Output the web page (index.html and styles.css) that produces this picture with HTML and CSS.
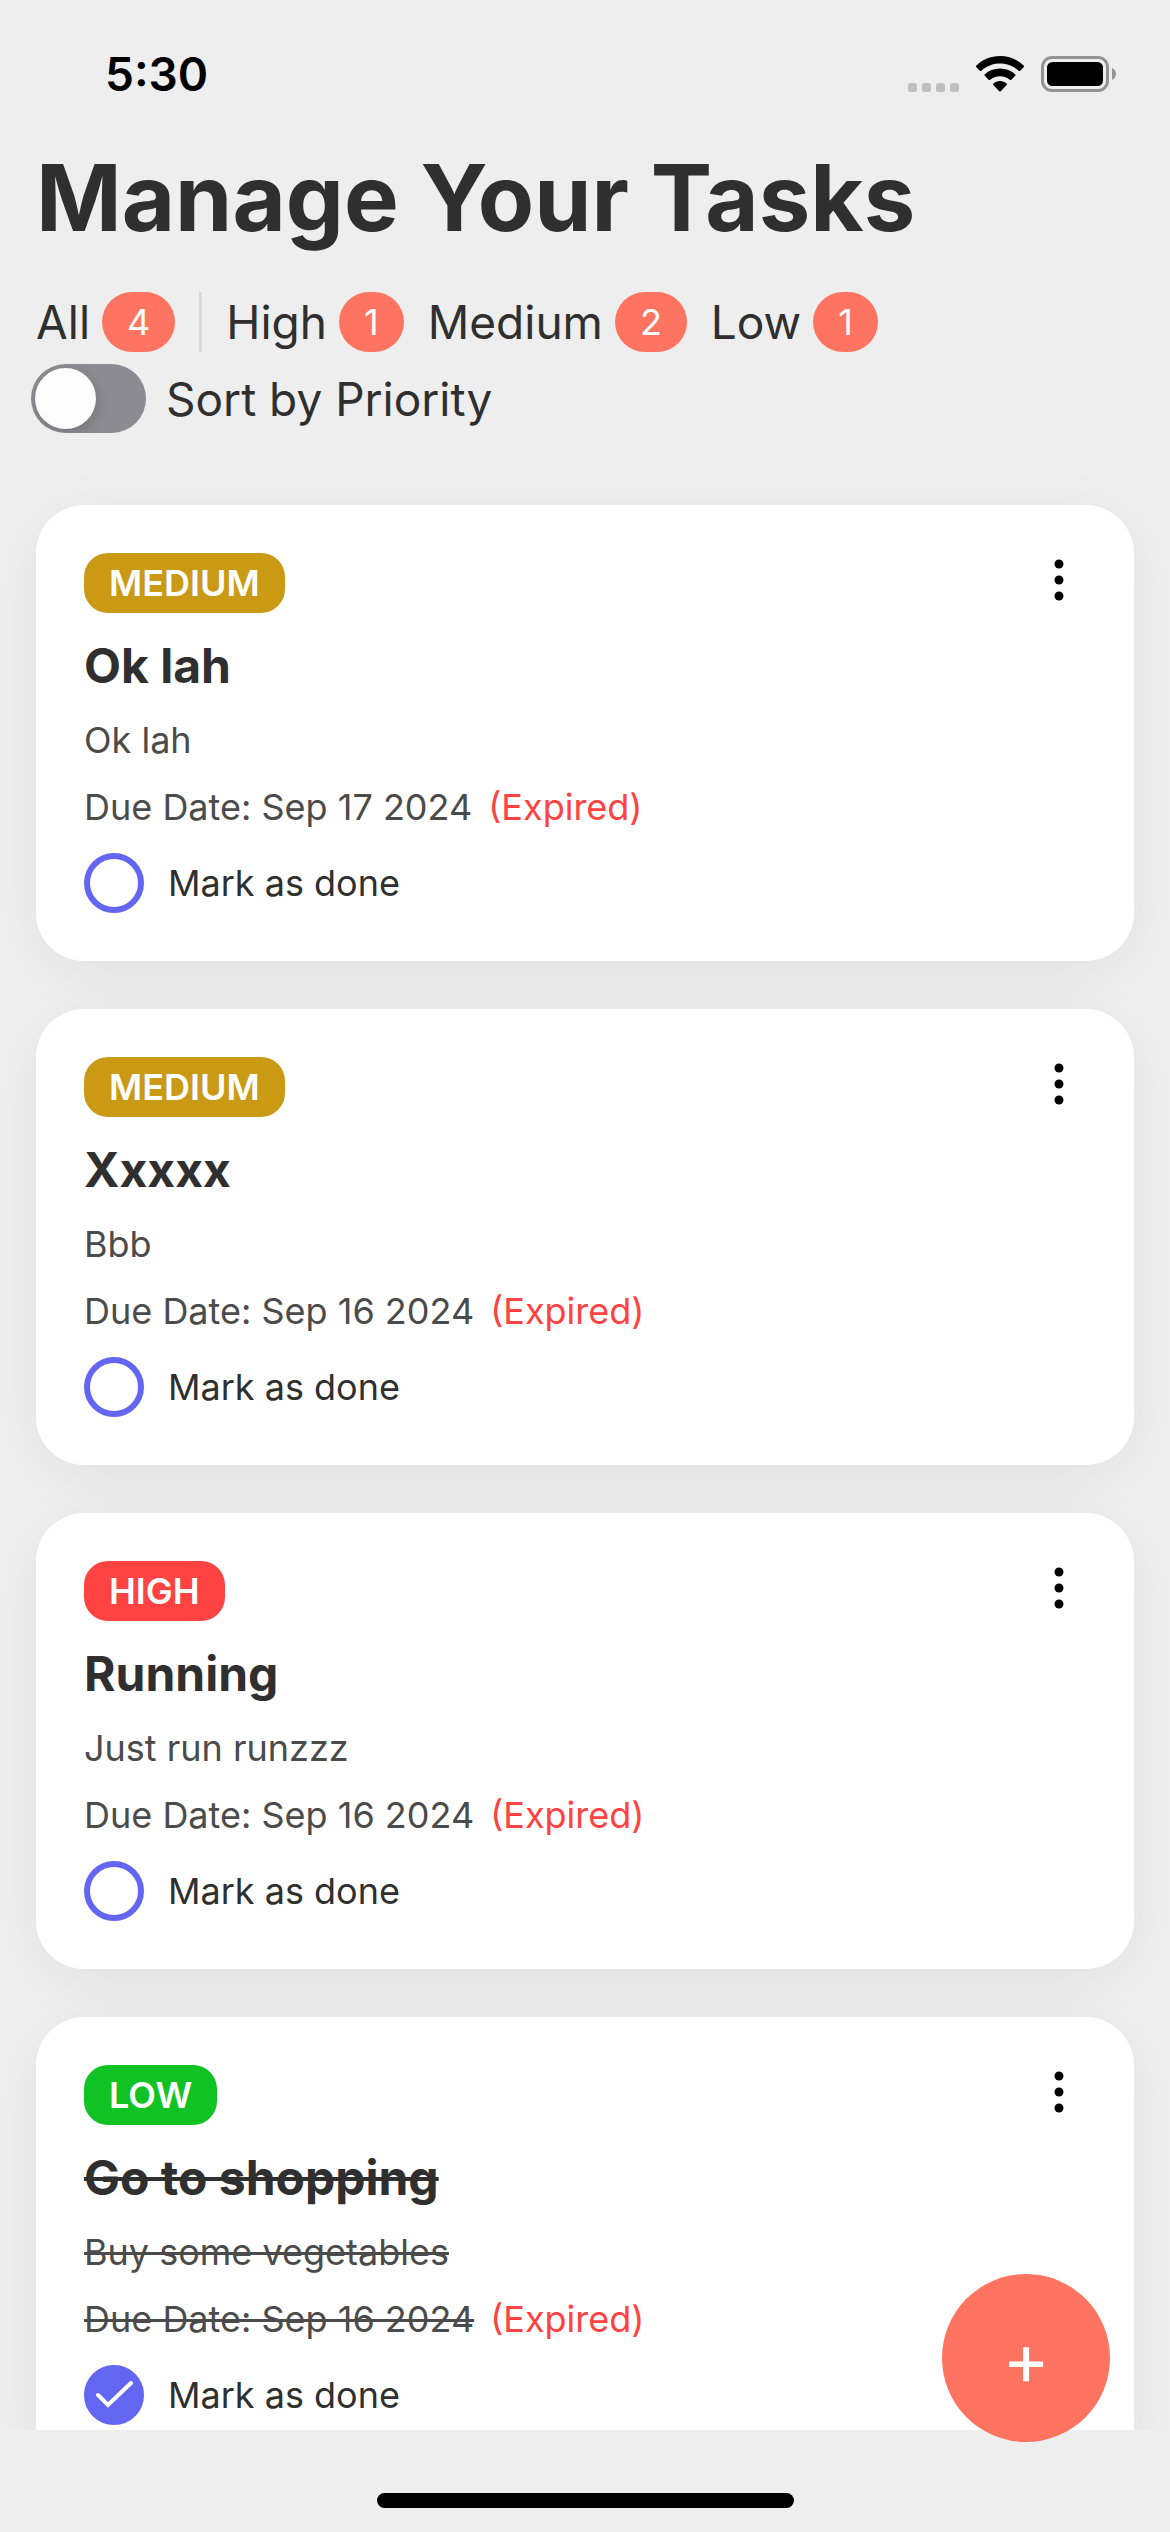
FILE: index.html
```html
<!DOCTYPE html>
<html lang="en">
<head>
<meta charset="utf-8">
<meta name="viewport" content="width=device-width, initial-scale=1">
<title>Manage Your Tasks</title>
<link rel="stylesheet" href="styles.css">
</head>
<body>
<div class="screen">
  <div class="status-bar">
    <span class="clock">5:30</span>
    <div class="status-icons">
      <svg class="icon-cell" width="51" height="9" viewBox="0 0 51 9" aria-hidden="true"><rect width="9" height="9" rx="2.5"/><rect x="14" width="9" height="9" rx="2.5"/><rect x="28" width="9" height="9" rx="2.5"/><rect x="42" width="9" height="9" rx="2.5"/></svg>
      <svg class="icon-wifi" width="50" height="36" viewBox="0 0 50 36" aria-hidden="true"><path d="M25 0C34.400 0 42.800 3.600 48.600 9.600Q49.400 10.400 48.600 11.200L45.200 14.700Q44.400 15.500 43.600 14.700C38.700 10.200 32.200 7.500 25 7.500S11.300 10.200 6.400 14.700Q5.600 15.500 4.800 14.700L1.400 11.200Q.6 10.400 1.400 9.600C7.200 3.600 15.600 0 25 0Z"/><path d="M25 12.500C31 12.500 36.200 14.700 40.200 18.200Q41 19 40.200 19.800L36.400 23.700Q35.600 24.500 34.800 23.800C32.200 21.500 28.800 20.200 25 20.200S17.800 21.500 15.200 23.800Q14.400 24.500 13.600 23.700L9.800 19.800Q9 19 9.800 18.200C13.800 14.700 19 12.500 25 12.500Z"/><path d="M25 25C27.500 25 29.800 25.900 31.600 27.400Q32.400 28.200 31.600 29L25.800 35.200Q25 36 24.200 35.200L18.400 29Q17.600 28.200 18.400 27.400C20.200 25.900 22.500 25 25 25Z"/></svg>
      <svg class="icon-battery" width="75" height="36" viewBox="0 0 75 36" aria-hidden="true"><rect x="1.500" y="1.500" width="65" height="33" rx="9.500" fill="none" stroke="#929292" stroke-width="3"/><rect x="6" y="6" width="56" height="24" rx="5.500"/><path d="M71 12C76.300 14.500 76.300 21.500 71 24Z" fill="#929292"/></svg>
    </div>
  </div>

  <header class="header">
    <h1 class="title">Manage Your Tasks</h1>
    <div class="filters">
      <button class="filter filter-all" type="button">All <span class="count">4</span></button>
      <button class="filter" type="button">High <span class="count">1</span></button>
      <button class="filter" type="button">Medium <span class="count">2</span></button>
      <button class="filter" type="button">Low <span class="count">1</span></button>
    </div>
    <label class="sort"><input class="switch" type="checkbox" role="switch">Sort by Priority</label>
  </header>

  <main class="tasks">
    <article class="card">
      <div class="card-top"><span class="priority medium">MEDIUM</span>
        <button class="more" type="button" aria-label="Task options"><svg width="54" height="54" viewBox="0 0 54 54"><circle cx="27" cy="11" r="4.500"/><circle cx="27" cy="27" r="4.500"/><circle cx="27" cy="43" r="4.500"/></svg></button></div>
      <h2 class="name">Ok lah</h2>
      <p class="detail">Ok lah</p>
      <p class="due"><span class="detail">Due Date: Sep 17 2024</span><span class="expired">(Expired)</span></p>
      <label class="done"><input class="check" type="checkbox">Mark as done</label>
    </article>
    <article class="card">
      <div class="card-top"><span class="priority medium">MEDIUM</span>
        <button class="more" type="button" aria-label="Task options"><svg width="54" height="54" viewBox="0 0 54 54"><circle cx="27" cy="11" r="4.500"/><circle cx="27" cy="27" r="4.500"/><circle cx="27" cy="43" r="4.500"/></svg></button></div>
      <h2 class="name">Xxxxx</h2>
      <p class="detail">Bbb</p>
      <p class="due"><span class="detail">Due Date: Sep 16 2024</span><span class="expired">(Expired)</span></p>
      <label class="done"><input class="check" type="checkbox">Mark as done</label>
    </article>
    <article class="card">
      <div class="card-top"><span class="priority high">HIGH</span>
        <button class="more" type="button" aria-label="Task options"><svg width="54" height="54" viewBox="0 0 54 54"><circle cx="27" cy="11" r="4.500"/><circle cx="27" cy="27" r="4.500"/><circle cx="27" cy="43" r="4.500"/></svg></button></div>
      <h2 class="name">Running</h2>
      <p class="detail">Just run runzzz</p>
      <p class="due"><span class="detail">Due Date: Sep 16 2024</span><span class="expired">(Expired)</span></p>
      <label class="done"><input class="check" type="checkbox">Mark as done</label>
    </article>
    <article class="card completed">
      <div class="card-top"><span class="priority low">LOW</span>
        <button class="more" type="button" aria-label="Task options"><svg width="54" height="54" viewBox="0 0 54 54"><circle cx="27" cy="11" r="4.500"/><circle cx="27" cy="27" r="4.500"/><circle cx="27" cy="43" r="4.500"/></svg></button></div>
      <h2 class="name">Go to shopping</h2>
      <p class="detail">Buy some vegetables</p>
      <p class="due"><span class="detail">Due Date: Sep 16 2024</span><span class="expired">(Expired)</span></p>
      <label class="done"><input class="check" type="checkbox" checked>Mark as done</label>
    </article>
  </main>

  <footer class="home-area"><div class="home-indicator"></div></footer>
  <button class="fab" type="button" aria-label="Add task">+</button>
</div>
</body>
</html>
```
FILE: styles.css
```css
* { box-sizing: border-box; }

body {
  margin: 0;
  background: #eee;
  color: #2f2f2f;
  font-family: Inter, "Liberation Sans", sans-serif;
}

h1, h2, p { margin: 0; }

button {
  margin: 0;
  padding: 0;
  border: 0;
  background: none;
  color: inherit;
  font: inherit;
}

.screen {
  position: relative;
  display: flex;
  flex-direction: column;
  height: 100vh;
  overflow: hidden;
}

/* Status bar */
.status-bar {
  display: flex;
  flex: none;
  align-items: center;
  justify-content: space-between;
  height: 148px;
  padding: 0 54px 0 105px;
  color: #000;
}

.clock {
  font-size: 46px;
  font-weight: 600;
  line-height: 56px;
}

.status-icons {
  display: flex;
  align-items: flex-end;
  gap: 16px;
}

.icon-cell { fill: #bfbfbf; }

/* Header */
.header {
  flex: none;
  padding: 0 36px;
}

.title {
  font-size: 92px;
  font-weight: 700;
  line-height: 100px;
}

.filters {
  display: flex;
  gap: 24px;
  margin-top: 44px;
}

.filter {
  display: flex;
  align-items: center;
  gap: 12px;
  height: 60px;
  font-size: 46px;
  line-height: 58px;
}

.filter-all {
  padding-right: 24px;
  border-right: 3px solid #d8d8d8;
}

.count {
  padding: 0 25px;
  border-radius: 30px;
  background: #ff7461;
  color: #fff;
  font-size: 36px;
  line-height: 60px;
}

.sort {
  display: flex;
  align-items: center;
  gap: 20px;
  width: max-content;
  margin: 12px 0 0 -5px;
  font-size: 46px;
}

.switch {
  appearance: none;
  display: flex;
  align-items: center;
  width: 115px;
  height: 69px;
  margin: 0;
  padding: 4px;
  overflow: hidden;
  border-radius: 35px;
  background: #8b8b91;
}

.switch::before {
  content: "";
  width: 61px;
  height: 61px;
  border-radius: 50%;
  background: #fcfcfc;
  box-shadow: 2px 4px 12px rgba(0, 0, 0, 0.15);
}

.switch:checked { justify-content: flex-end; }

/* Task list */
.tasks {
  display: flex;
  flex: 1;
  flex-direction: column;
  gap: 48px;
  min-height: 0;
  padding: 72px 36px 0;
  overflow: hidden;
}

.card {
  display: flex;
  flex: none;
  flex-direction: column;
  gap: 24px;
  padding: 48px;
  border-radius: 48px;
  background: #fff;
  box-shadow: 0 12px 60px rgba(0, 0, 0, 0.05);
}

.card-top {
  display: flex;
  justify-content: space-between;
  height: 60px;
}

.priority {
  padding: 0 25px;
  border-radius: 24px;
  color: #fff;
  font-size: 36px;
  font-weight: 600;
  line-height: 60px;
}

.medium { background: #cb9a14; }
.high { background: #ff4242; }
.low { background: #10c224; }

.more {
  width: 54px;
  height: 54px;
}

.more svg { display: block; }

.name {
  font-size: 48px;
  font-weight: 700;
  line-height: 58px;
}

.detail, .expired {
  font-size: 36px;
  line-height: 43px;
}

.detail { color: #4b4b4b; }
.expired { color: #ff4242; }

.due {
  display: flex;
  gap: 16px;
}

.completed .name, .completed .detail { text-decoration: line-through; }

.done {
  display: flex;
  align-items: center;
  gap: 24px;
  width: max-content;
  font-size: 36px;
}

.check {
  appearance: none;
  width: 60px;
  height: 60px;
  margin: 0;
  border: 6px solid #6366f1;
  border-radius: 50%;
}

.check:checked {
  background: #6366f1 url("data:image/svg+xml,%3Csvg xmlns='http://www.w3.org/2000/svg' viewBox='0 0 48 48'%3E%3Cpath d='M8 24L18 34L41 12' fill='none' stroke='white' stroke-width='4' stroke-linecap='round' stroke-linejoin='miter'/%3E%3C/svg%3E") center / 48px no-repeat;
}

/* Bottom area */
.home-area {
  display: flex;
  flex: none;
  align-items: flex-end;
  justify-content: center;
  height: 102px;
  padding-bottom: 24px;
}

.home-indicator {
  width: 417px;
  height: 15px;
  border-radius: 8px;
  background: #000;
}

.fab {
  position: absolute;
  right: 60px;
  bottom: 90px;
  width: 168px;
  height: 168px;
  border-radius: 50%;
  background: #ff7461;
  color: #fff;
  font-size: 72px;
}
```
